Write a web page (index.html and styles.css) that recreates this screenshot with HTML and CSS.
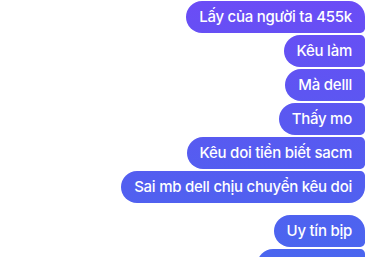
FILE: index.html
```html
<!DOCTYPE html>
<html lang="vi">
<head>
    <meta charset="UTF-8">
    <meta name="viewport" content="width=device-width, initial-scale=1.0">
    <title>Chat</title>
    <link rel="stylesheet" href="styles.css">
</head>
<body>
    <div class="thread">
        <div class="group">
            <div class="msg first">Lấy của người ta 455k</div>
            <div class="msg">Kêu làm</div>
            <div class="msg">Mà delll</div>
            <div class="msg">Thấy mo</div>
            <div class="msg">Kêu doi tiền biết sacm</div>
            <div class="msg last">Sai mb dell chịu chuyển kêu doi</div>
        </div>
        <div class="group">
            <div class="msg first">Uy tín bịp</div>
            <div class="msg cut"></div>
        </div>
    </div>
</body>
</html>
```

FILE: styles.css
```css
body {
    margin: 0;
    background-color: #fff;
    overflow: hidden;
    font-family: Inter, "Noto Sans", sans-serif;
}
.thread {
    display: flex;
    flex-direction: column;
    gap: 12px;
    padding: 1px 9px 0 0;
}
.group {
    display: flex;
    flex-direction: column;
    align-items: flex-end;
    gap: 2px;
}
.msg {
    height: 32px;
    box-sizing: border-box;
    padding: 6px 13px;
    font-size: 15px;
    font-weight: 500;
    letter-spacing: -0.25px;
    line-height: 20px;
    color: #fff;
    white-space: nowrap;
    border-radius: 17px 5px 5px 17px;
    background: linear-gradient(180deg, #6b4cf6 0%, #5a58f1 45%, #4a66ef 100%);
    background-attachment: fixed;
}
.msg.first {
    border-top-right-radius: 17px;
}
.msg.last {
    border-bottom-right-radius: 17px;
}
.msg.cut {
    width: 108px;
}
```
